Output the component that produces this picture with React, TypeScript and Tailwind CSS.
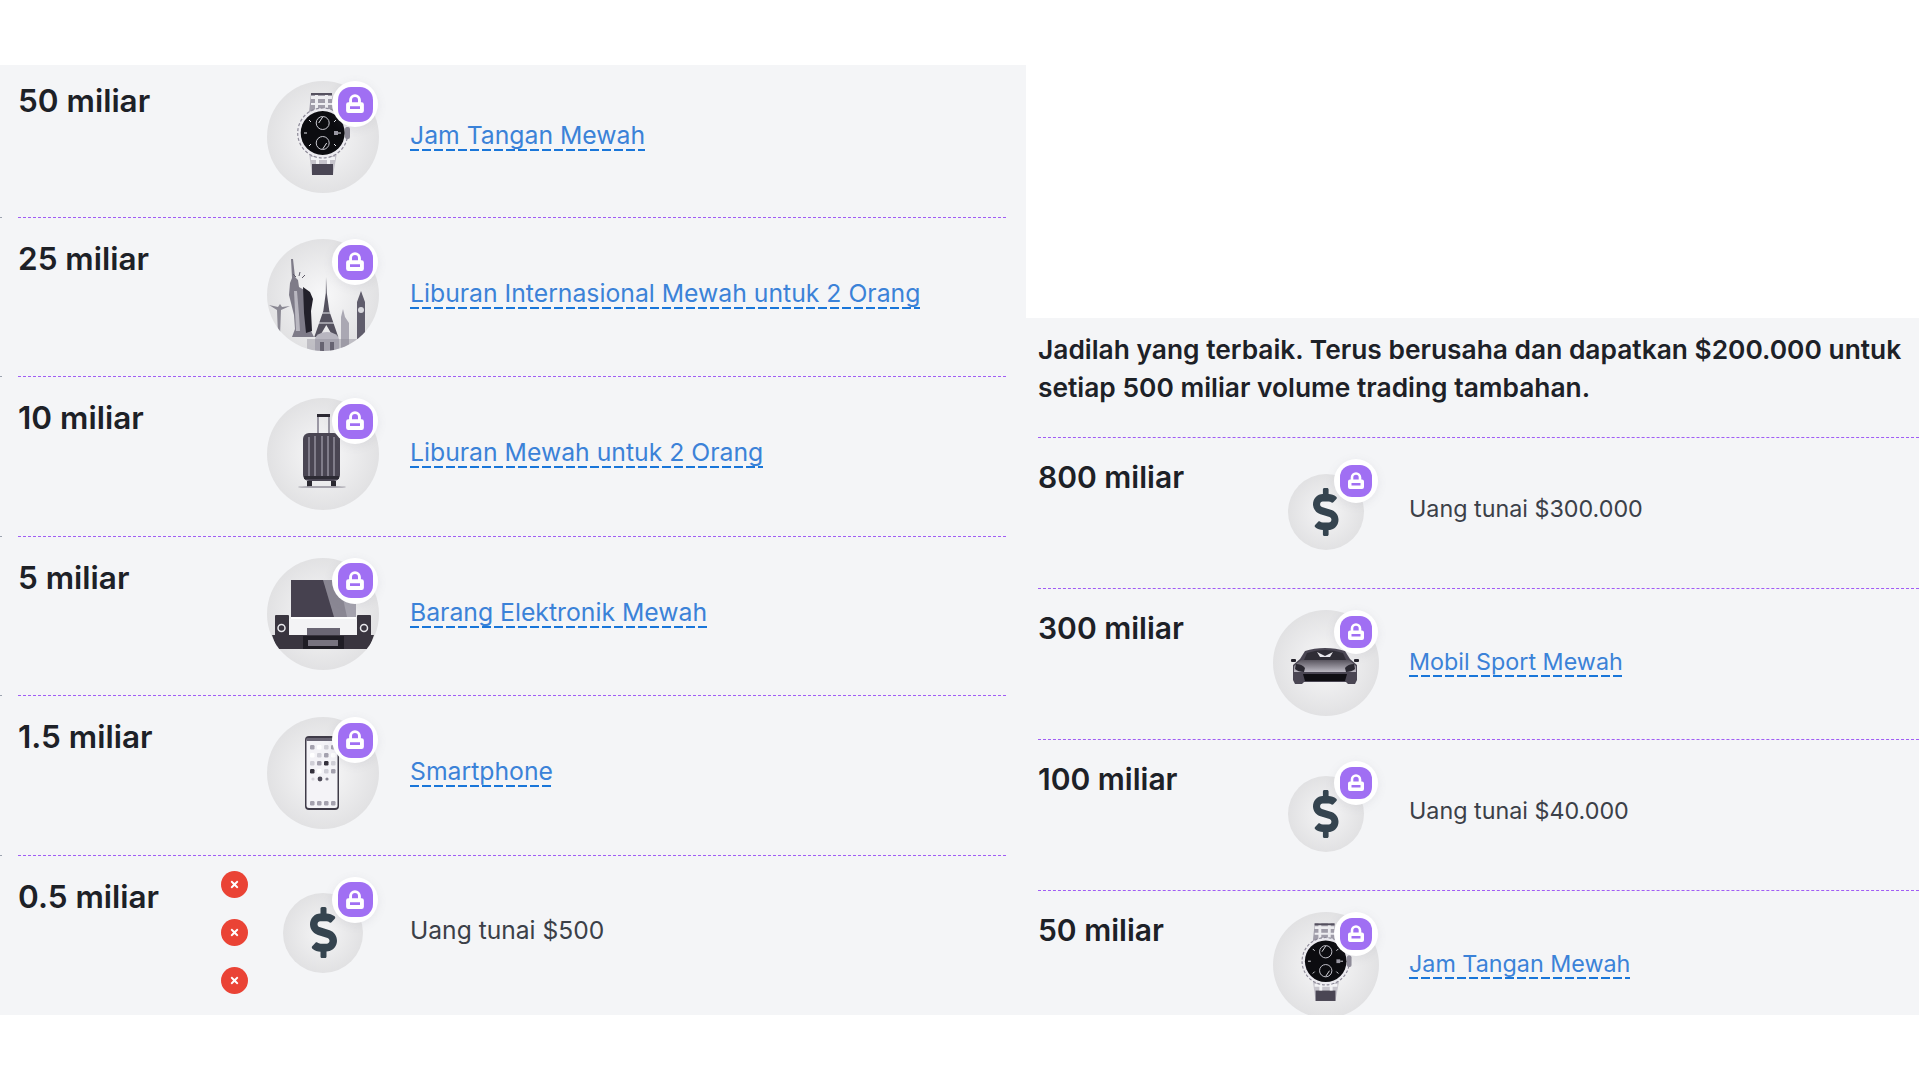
import React from "react";
import { FaDollarSign, FaTimes } from "react-icons/fa";

const Lock = ({ s = 18 }: { s?: number }) => (
  <svg width={s} height={s} viewBox="0 0 18 18" fill="none">
    <path d="M5 8V5.5a4 4 0 0 1 8 0V8" stroke="#fff" strokeWidth="2.6" />
    <path
      fillRule="evenodd"
      d="M3 7.5h12a2 2 0 0 1 2 2v5.5a2 2 0 0 1-2 2H3a2 2 0 0 1-2-2V9.5a2 2 0 0 1 2-2zM4.5 11v2.5h9V11z"
      fill="#fff"
    />
  </svg>
);

const Watch = () => (
  <>
    <path d="M44 12h21l2 20H42z" fill="#a09da9" />
    <path d="M44 15h21v3H44zM44 22h22v2H44zM48 12h3v20h-3zM58 12h3v20h-3z" fill="#eeeef1" />
    <path d="M44 12h21v2H44z" fill="#55515f" />
    <path d="M42 72h28l-4 22H45z" fill="#c6c4cc" />
    <path d="M45 83h21v11H45z" fill="#4a4654" />
    <path d="M44 76h24v3H44zM49 72h3v11h-3zM60 72h3v11h-3z" fill="#f3f3f6" />
    <circle cx="55.7" cy="52" r="25" fill="#ecebf0" stroke="#8d8a98" strokeWidth="1.2" strokeDasharray="3 2" />
    <rect x="78" y="46" width="5" height="12" rx="2" fill="#8f8c99" />
    <circle cx="55.7" cy="52" r="22" fill="#0c0c10" />
    <circle cx="55.7" cy="42" r="6.5" fill="none" stroke="#c9c8d0" strokeWidth="1" />
    <circle cx="55.7" cy="62" r="6.5" fill="none" stroke="#c9c8d0" strokeWidth="1" />
    <path d="M55.7 36l-4 6M55.7 68l4-6M37 52h3M71 52h3M42 39l2 2M69 39l-2 2M42 65l2-2M69 65l-2-2" stroke="#e2e2e8" strokeWidth="1" />
    <rect x="67" y="50" width="4" height="4" fill="#9a98a3" />
  </>
);

const Landmarks = () => (
  <>
    <path d="M2 66l9 2 2-3 2 3 8-1-9 4-1 26-2-1-1-25z" fill="#8a8893" />
    <path d="M24 20h2l2 18 3 3 1 7 7 4 5 7-1 10 1 23 3 6H25l3-8-1-14-5-20 1-12 2-5z" fill="#7e7b88" />
    <path d="M27 52l3 0 2 24 1 16-4 0z" fill="#b9b7c0" />
    <path d="M36 48l7 5 3 7-2 12 1 20-6 2-2-20z" fill="#22202a" />
    <path d="M29 38l-3-3M32 37l1-4M35 39l3-3" stroke="#5d5a68" strokeWidth="1" />
    <path d="M59 38l.8 16 2.5 18 9 26h-5l-7-12-7 12h-5l9-26 2.5-18z" fill="#55525f" />
    <path d="M54 74h11M52 84h15" stroke="#e9e9ee" strokeWidth="1" />
    <path d="M48 112v-11a12 8 0 0 1 24 0v11z" fill="#b8b6c0" />
    <path d="M53 112v-9h4v9zM63 112v-9h4v9z" fill="#4f4c5a" />
    <path d="M74 112V78l2-8 2 8 4 6v28z" fill="#aaa8b3" />
    <path d="M90 100V63l4-11 4 11v37z" fill="#605d6c" />
    <circle cx="94" cy="71" r="3" fill="#d9d9de" />
    <path d="M40 112v-12h56v12z" fill="#8a8894" opacity=".4" />
  </>
);

const Suitcase = () => (
  <>
    <path d="M50 35V18a2 2 0 0 1 2-2h9a2 2 0 0 1 2 2v17h-2V19h-9v16z" fill="#9b98a4" />
    <path d="M50 16h13v3H50z" fill="#2b2932" />
    <rect x="36" y="35" width="37" height="48" rx="6" fill="#4a4653" />
    <path d="M42 39v40M48 38v41M55 38v41M61 38v41M67 39v40" stroke="#8e8b98" strokeWidth="1.6" />
    <path d="M37 78h35v3H37z" fill="#2d2b34" />
    <path d="M40 83h5v6h-5zM64 83h5v6h-5z" fill="#2a2830" />
    <ellipse cx="55" cy="89" rx="24" ry="1" fill="#a5a3ac" />
  </>
);

const Entertainment = () => (
  <>
    <rect x="24" y="22" width="65" height="37" fill="#46414f" />
    <path d="M56 22h33v37H67z" fill="#8a8793" />
    <path d="M72 22h17v37H80z" fill="#a5a3ae" />
    <rect x="24" y="59" width="65" height="2" fill="#fff" />
    <rect x="8" y="57" width="14" height="21" rx="1" fill="#39353f" />
    <rect x="90" y="57" width="14" height="21" rx="1" fill="#39353f" />
    <circle cx="14.5" cy="70" r="3.5" fill="none" stroke="#e8e8ec" strokeWidth="1.5" />
    <circle cx="97" cy="70" r="3.5" fill="none" stroke="#e8e8ec" strokeWidth="1.5" />
    <rect x="22" y="61" width="68" height="16" fill="#f3f3f5" />
    <rect x="40" y="70" width="33" height="7" fill="#6a6674" />
    <path d="M5 77h102l-5 14H10z" fill="#39353f" />
    <rect x="36" y="78" width="41" height="13" fill="#1f1d25" />
    <rect x="41" y="82" width="30" height="6" fill="#77737f" />
  </>
);

const Phone = () => (
  <>
    <rect x="38" y="19" width="34" height="74" rx="4" fill="#3f3b48" />
    <rect x="39.5" y="21" width="31" height="70" rx="2.5" fill="#f4f3f7" />
    <rect x="39.5" y="21" width="31" height="3" fill="#6b6776" />
    {[28, 36, 44, 52].map((y, r) =>
      [43, 50, 57, 64].map((x, c) => (
        <rect key={`${x}-${y}`} x={x} y={y} width="4.5" height="4.5" rx="1.2" fill={(r === 2 && c === 2) || (r === 3 && c === 0) ? "#34313c" : (r + c) % 3 === 0 ? "#a4a1ae" : (r + c) % 3 === 1 ? "#ffffff" : "#cfced6"} />
      ))
    )}
    <circle cx="46" cy="62" r="1.6" fill="#d5d4db" />
    <circle cx="53" cy="62" r="2.4" fill="#4c4855" />
    <circle cx="60" cy="62" r="1.6" fill="#8a8793" />
    {[43, 50, 57, 64].map((x) => (
      <rect key={x} x={x} y="84" width="4.5" height="4.5" rx="1.2" fill="#a4a1ae" />
    ))}
  </>
);

const Car = () => (
  <>
    <defs>
      <linearGradient id="hood" x1="0" x2="0" y1="0" y2="1">
        <stop offset="0" stopColor="#59555f" />
        <stop offset="1" stopColor="#bcb9c3" />
      </linearGradient>
    </defs>
    <path d="M32 41q9-3 20-3t20 3l5 8 7 6v15l-2 4H75l-2-2H31l-2 2H22l-2-4V55l7-6z" fill="#4a4653" />
    <path d="M34 43q9-3 18-3t18 3l3 7H31z" fill="#2f2d36" />
    <path d="M44 42l8 4 8-4-3 5H47z" fill="#e9e8ed" />
    <path d="M28 50h48l7 6v6H21v-6z" fill="url(#hood)" />
    <path d="M23 54q6 0 9 4l-1 4q-6 0-9-3zM81 54q-6 0-9 4l1 4q6 0 9-3z" fill="#2a2831" />
    <path d="M30 64h44l-2 7H32z" fill="#0f0e13" />
    <rect x="18" y="49" width="5" height="3" rx="1" fill="#23212a" />
    <rect x="81" y="49" width="5" height="3" rx="1" fill="#23212a" />
  </>
);

const pictures = { watch: Watch, landmarks: Landmarks, suitcase: Suitcase, tv: Entertainment, phone: Phone };

function Badge({ big }: { big: boolean }) {
  return (
    <span
      className={
        big
          ? "absolute left-[65px] top-0 flex h-[46px] w-[46px] items-center justify-center rounded-full bg-white shadow-[0_2px_10px_rgba(120,120,140,0.12)]"
          : "absolute left-[61px] top-0 flex h-[44px] w-[44px] items-center justify-center rounded-full bg-white shadow-[0_2px_10px_rgba(120,120,140,0.12)]"
      }
    >
      <span
        className={
          big
            ? "flex h-[35px] w-[35px] items-center justify-center rounded-[13px] bg-[#a06ff3]"
            : "flex h-[32px] w-[32px] items-center justify-center rounded-[12px] bg-[#a06ff3]"
        }
      >
        <Lock s={big ? 20 : 18} />
      </span>
    </span>
  );
}

function Medal({ big, kind }: { big: boolean; kind: string }) {
  const Pic = (pictures as Record<string, React.FC>)[kind];
  const box = big ? "relative flex h-[112px] w-[112px] shrink-0 items-center justify-center" : "relative flex h-[106px] w-[106px] shrink-0 items-center justify-center";
  if (kind === "cash") {
    return (
      <div className={box}>
        <div className={big ? "flex h-[80px] w-[80px] items-center justify-center rounded-full bg-[radial-gradient(circle,#f5f5f6_0%,#d9d9db_100%)]" : "flex h-[76px] w-[76px] items-center justify-center rounded-full bg-[radial-gradient(circle,#f5f5f6_0%,#d9d9db_100%)]"}>
          <FaDollarSign preserveAspectRatio="none" className={big ? "h-[51px] w-[27px] text-[#35444f]" : "h-[48px] w-[25.5px] text-[#35444f]"} />
        </div>
        <Badge big={big} />
      </div>
    );
  }
  return (
    <div className={box}>
      <div className="h-full w-full overflow-hidden rounded-full bg-[radial-gradient(circle,#f8f8f9_0%,#d8d8da_100%)]">
        <svg viewBox={kind === "car" ? "0 0 106 106" : "0 0 112 112"} className="h-full w-full blur-[0.5px]">
          {kind === "car" ? <Car /> : <Pic />}
        </svg>
      </div>
      <Badge big={big} />
    </div>
  );
}

function Reward({ text, link, big }: { text: string; link: boolean; big: boolean }) {
  if (link) {
    return (
      <a className={big ? "mb-[3px] ml-[31px] bg-[repeating-linear-gradient(90deg,#1976d9_0_9px,transparent_9px_12px)] bg-[length:100%_2px] bg-bottom bg-no-repeat pb-[1px] text-[24.75px] leading-[30px] text-[#3b82d8]" : "mb-[2px] ml-[30px] bg-[repeating-linear-gradient(90deg,#1976d9_0_9px,transparent_9px_12px)] bg-[length:100%_2px] bg-bottom bg-no-repeat pb-[1px] text-[23.3px] leading-[29px] text-[#3b82d8]"}>
        {text}
      </a>
    );
  }
  return <span className={big ? "mb-[5px] ml-[31px] text-[24.6px] leading-[30px] text-[#3b4048]" : "mb-[7px] ml-[30px] text-[23.3px] leading-[29px] text-[#3b4048]"}>{text}</span>;
}

const Divider = ({ stub }: { stub?: boolean }) => (
  <div className="flex">
    {stub && <span className="mr-[16px] w-[2px] border-t border-[#9ca3af]" />}
    <span className="flex-1 border-t-[1.5px] border-dashed border-[#a15df5]" />
  </div>
);

const left = [
  { v: "50 miliar", kind: "watch", t: "Jam Tangan Mewah", link: true },
  { v: "25 miliar", kind: "landmarks", t: "Liburan Internasional Mewah untuk 2 Orang", link: true },
  { v: "10 miliar", kind: "suitcase", t: "Liburan Mewah untuk 2 Orang", link: true },
  { v: "5 miliar", kind: "tv", t: "Barang Elektronik Mewah", link: true },
  { v: "1.5 miliar", kind: "phone", t: "Smartphone", link: true },
  { v: "0.5 miliar", kind: "cash", t: "Uang tunai $500", link: false, x: true },
];

const right = [
  { v: "800 miliar", kind: "cash", t: "Uang tunai $300.000", link: false },
  { v: "300 miliar", kind: "car", t: "Mobil Sport Mewah", link: true },
  { v: "100 miliar", kind: "cash", t: "Uang tunai $40.000", link: false },
  { v: "50 miliar", kind: "watch", t: "Jam Tangan Mewah", link: true },
];

export default function App() {
  return (
    <div className="flex h-[1079px] w-[1919px] items-start bg-white pt-[65px] font-['Inter',sans-serif]">
      <section className="h-[950px] w-[1026px] shrink-0 bg-[#f4f5f7] pr-[20px]">
        {left.map((r, i) => (
          <div key={r.v}>
            {i > 0 && <Divider stub />}
            <div className={i === 0 ? "flex h-[152px] items-start pl-[18px] pt-[16px]" : "flex h-[158.4px] items-start pl-[18px] pt-[21px]"}>
              <div className="w-[203px] pt-px text-[31.5px] font-semibold leading-[38px] text-[#1d2127]">{r.v}</div>
              <div className="flex h-[112px] w-[46px] flex-col justify-center gap-[21px]">
                {r.x &&
                  [0, 1, 2].map((n) => (
                    <span key={n} className="flex h-[27px] w-[27px] shrink-0 items-center justify-center rounded-full bg-[#ea4335] text-white">
                      <FaTimes className="h-[11px] w-[11px]" />
                    </span>
                  ))}
              </div>
              <div className="flex h-[112px] items-center">
                <Medal big kind={r.kind} />
                <Reward text={r.t} link={r.link} big />
              </div>
            </div>
          </div>
        ))}
      </section>
      <section className="mt-[253px] h-[697px] flex-1 overflow-hidden bg-[#f4f5f7] pl-[12px]">
        <p className="pb-[31px] pt-[12px] text-[26.35px] font-semibold leading-[38px] text-[#1d2127]">
          Jadilah yang terbaik. Terus berusaha dan dapatkan $200.000 untuk
          <br />
          setiap 500 miliar volume trading tambahan.
        </p>
        {right.map((r) => (
          <div key={r.v}>
            <Divider />
            <div className="flex h-[150px] items-start pt-[21px]">
              <div className="-mt-px w-[235px] text-[30px] font-semibold leading-[38px] text-[#1d2127]">{r.v}</div>
              <div className="flex h-[106px] items-center">
                <Medal big={false} kind={r.kind} />
                <Reward text={r.t} link={r.link} big={false} />
              </div>
            </div>
          </div>
        ))}
      </section>
    </div>
  );
}
